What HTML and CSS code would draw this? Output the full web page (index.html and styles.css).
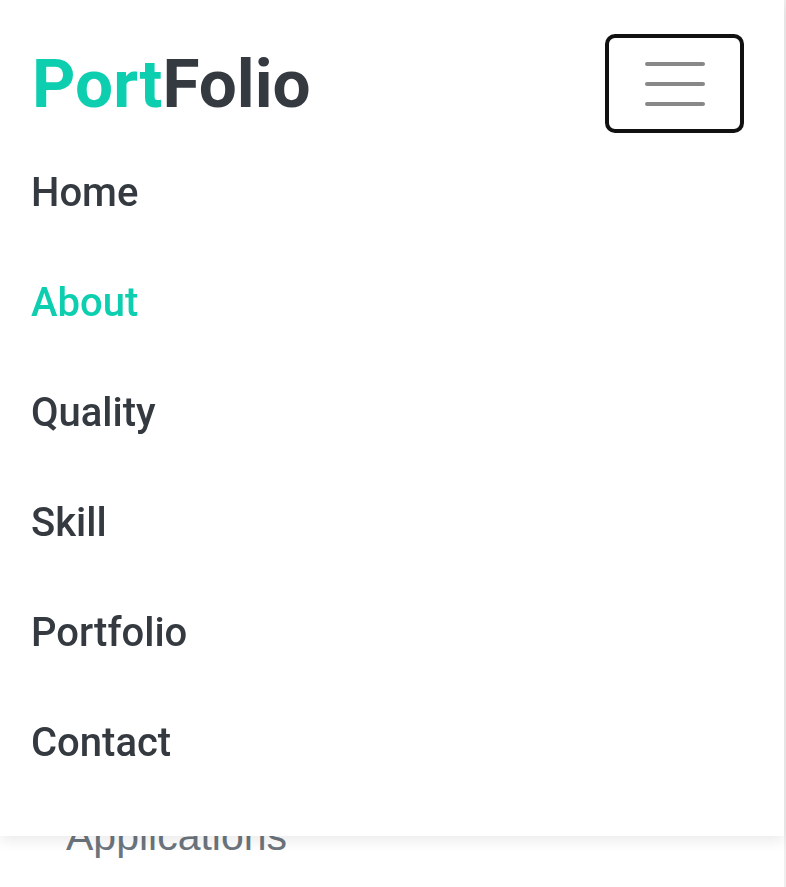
FILE: index.html
```html
<!DOCTYPE html>
<html lang="en">
<head>
<meta charset="utf-8">
<title>PortFolio</title>
<link rel="stylesheet" href="styles.css">
</head>
<body>
<header class="site-header">
  <div class="brand-row">
    <a class="brand" href="#"><span class="brand-accent">Port</span>Folio</a>
    <button class="toggler" type="button" aria-label="Toggle navigation">
      <span class="bar"></span><span class="bar"></span><span class="bar"></span>
    </button>
  </div>
  <nav class="menu">
    <a class="menu-link" href="#">Home</a>
    <a class="menu-link active" href="#">About</a>
    <a class="menu-link" href="#">Quality</a>
    <a class="menu-link" href="#">Skill</a>
    <a class="menu-link" href="#">Portfolio</a>
    <a class="menu-link" href="#">Contact</a>
  </nav>
</header>
<main class="content">
  <p class="subtitle">Applications</p>
</main>
</body>
</html>
```
FILE: styles.css
```css
html {
  background: #efefef;
}
body {
  margin: 0;
  width: 784px;
  min-height: 887px;
  background: #fff;
  font-family: Roboto, "Liberation Sans", sans-serif;
}
.site-header {
  position: fixed;
  top: 0;
  left: 0;
  width: 784px;
  background: #fff;
  box-shadow: 0 4px 14px rgba(0, 0, 0, 0.09);
  padding: 34px 0 38px 0;
  box-sizing: border-box;
  z-index: 10;
}
.brand-row {
  display: flex;
  align-items: center;
  justify-content: space-between;
  padding: 0 40px 0 32px;
  height: 99px;
}
.brand {
  font-size: 67.5px;
  font-weight: 700;
  color: #343a40;
  text-decoration: none;
  letter-spacing: 0;
}
.brand-accent {
  color: #0dcfb0;
}
.toggler {
  width: 139px;
  height: 99px;
  border: 4px solid #111;
  border-radius: 10px;
  background: #fff;
  display: flex;
  flex-direction: column;
  align-items: center;
  justify-content: center;
  gap: 16px;
  padding: 0;
  box-sizing: border-box;
}
.bar {
  display: block;
  width: 60px;
  height: 4px;
  border-radius: 2px;
  background: #888;
}
.menu {
  display: flex;
  flex-direction: column;
  margin-top: 5px;
  padding-left: 31px;
}
.menu-link {
  font-size: 40px;
  font-weight: 500;
  line-height: 110px;
  color: #343a40;
  text-decoration: none;
}
.menu-link.active {
  color: #0dcfb0;
}
.content {
  padding: 812px 0 0 66px;
}
.subtitle {
  margin: 0;
  font-family: "Liberation Sans", Arial, sans-serif;
  font-size: 41px;
  line-height: 48px;
  color: #6c757d;
}
```
